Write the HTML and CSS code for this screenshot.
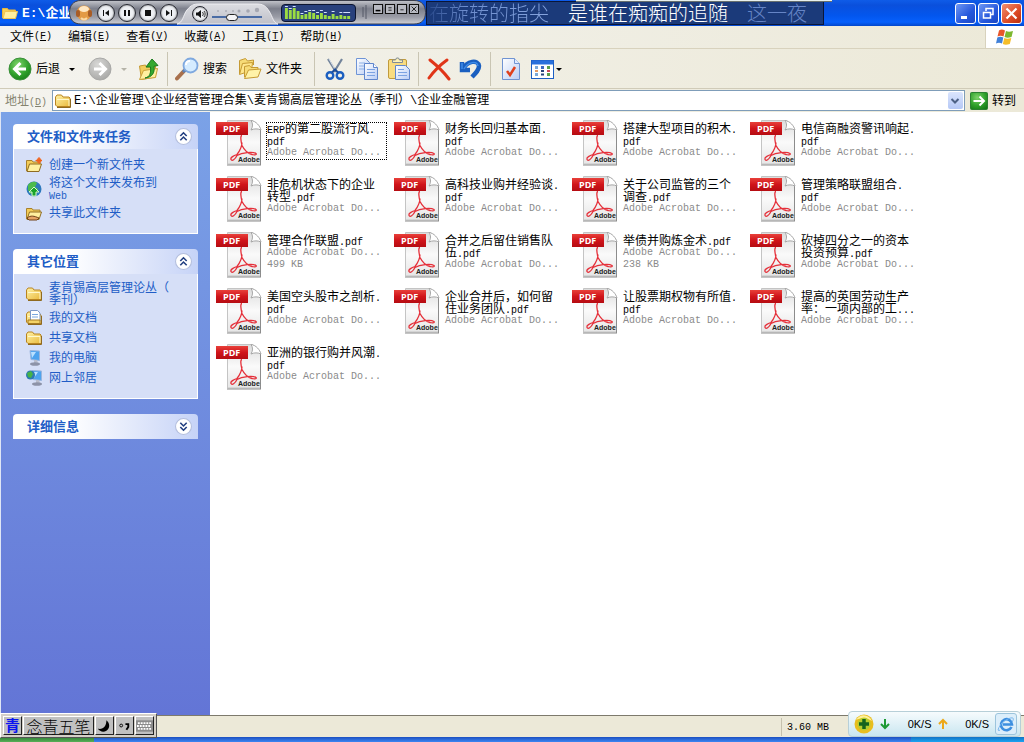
FILE: index.html
```html
<!DOCTYPE html>
<html lang="zh-CN">
<head>
<meta charset="utf-8">
<title>企业金融管理</title>
<link rel="stylesheet" href="styles.css">
</head>
<body>
<svg class="defs" aria-hidden="true">
  <defs>
    <linearGradient id="red" x1="0" y1="0" x2="0" y2="1"><stop offset="0" stop-color="#e8403a"/><stop offset=".5" stop-color="#d0141a"/><stop offset="1" stop-color="#b50c12"/></linearGradient>
    <linearGradient id="page" x1="0" y1="0" x2="0" y2="1"><stop offset="0" stop-color="#dcdcdc"/><stop offset=".5" stop-color="#fafafa"/><stop offset="1" stop-color="#e6e6e6"/></linearGradient>
    <linearGradient id="gold" x1="0" y1="0" x2="1" y2="1"><stop offset="0" stop-color="#fff3a8"/><stop offset="1" stop-color="#e9b93c"/></linearGradient>
    <radialGradient id="green" cx=".4" cy=".3" r=".8"><stop offset="0" stop-color="#7ed36a"/><stop offset=".6" stop-color="#2fa02b"/><stop offset="1" stop-color="#167a18"/></radialGradient>
    <radialGradient id="grey" cx=".4" cy=".3" r=".8"><stop offset="0" stop-color="#d8d8d6"/><stop offset="1" stop-color="#a4a4a2"/></radialGradient>
    <linearGradient id="sheet" x1="0" y1="0" x2="1" y2="1"><stop offset="0" stop-color="#ffffff"/><stop offset="1" stop-color="#b9cdf5"/></linearGradient>
    <linearGradient id="metal" x1="0" y1="0" x2="0" y2="1"><stop offset="0" stop-color="#c4c6cc"/><stop offset=".35" stop-color="#7c7f8b"/><stop offset=".7" stop-color="#9a9ca6"/><stop offset="1" stop-color="#cfd0d6"/></linearGradient>
    <linearGradient id="silver" x1="0" y1="0" x2="0" y2="1"><stop offset="0" stop-color="#dcdde2"/><stop offset="1" stop-color="#bfc0c8"/></linearGradient>
  </defs>
  <symbol id="i-pdf" viewBox="0 0 46 47">
    <path d="M11.500 1.500h25l8 8.500v35h-33z" fill="url(#page)" stroke="#c4c4c4"/>
    <path d="M11 46h34M44.500 11v35" stroke="#8c8c8c"/>
    <path d="M35 1.500c2 3 2 6 0 9.500 3-1.500 7-1.500 10 0-1-4-5-9-10-9.500z" fill="#fff" stroke="#a5a5a5"/>
    <path d="M26 16.500c-2 0-1 6 0 10 2 4 6 8 10 9 3 1 5 0 4-1-3-2-14-1-19 2-2 4-5 6-6 4s3-4 6-5c3-4 5-8 5-12" fill="none" stroke="#e5303a" stroke-width="1.300"/>
    <rect x="0" y="3" width="32" height="13" fill="url(#red)"/>
    <text x="7" y="13" font-family="Open Sans, sans-serif" font-size="9" font-weight="700" fill="#fff">PDF</text>
    <text x="22" y="43" font-family="Liberation Sans, sans-serif" font-size="7" font-weight="700" fill="#222">Adobe</text>
  </symbol>
  <symbol id="i-folder" viewBox="0 0 16 16">
    <path d="M.5 4l1.500-2h4.500l1.500 2h6l1 1v8.500h-13l-1.500-1.500z" fill="url(#gold)" stroke="#b98420"/>
    <path d="M2 6.500h12v6.500" fill="none" stroke="#fff8cc"/>
    <path d="M2 14.500h13.500V6" fill="none" stroke="#8f6a20"/>
  </symbol>
  <symbol id="i-openfolder" viewBox="0 0 16 16">
    <path d="M.5 14V3.500h5.500l1 1.500h7v3" fill="#f3cc58" stroke="#a8812c"/>
    <path d="M1 14.500l2.500-7.500h12l-2.500 7.500z" fill="#fff0a0" stroke="#8f6c22"/>
  </symbol>
  <symbol id="i-titlefolder" viewBox="0 0 16 16">
    <path d="M.5 13V3.500h5l1 1.500h7v2" fill="#f5cf55" stroke="#e8b63c"/>
    <path d="M1 13.500l2-7h12.500l-2 7z" fill="#fff0a0" stroke="#f0c452"/>
  </symbol>
  <symbol id="i-monitor" viewBox="0 0 16 16">
    <path d="M4 .5l9.500 .5v9.500l-8.500-1z" fill="#4da3ee" stroke="#9ab5dd"/>
    <path d="M5 2l5 0-4 6z" fill="#b9e0ff"/><path d="M8 10h3l1 3H8z" fill="#b8bccb"/><ellipse cx="9" cy="14" rx="5" ry="1.800" fill="#8d93a8"/>
  </symbol>
  <symbol id="i-chev" viewBox="0 0 16 16">
    <circle cx="8" cy="8" r="7.500" fill="#fff" stroke="#b3bedd"/>
    <path d="M5 7.500l3-3 3 3M5 11.500l3-3 3 3" fill="none" stroke="#223f80" stroke-width="1.500"/>
  </symbol>
</svg>

<div class="window">
  <header class="titlebar">
    <svg class="s16" viewBox="0 0 16 16"><use href="#i-titlefolder"/></svg>
    <h1 class="title"><span class="latin-title">E:\</span>企业</h1>
    <div class="winbtns">
      <button class="winbtn" aria-label="最小化"><svg viewBox="0 0 19 19"><path d="M5 13.500h6" stroke="#fff" stroke-width="3"/></svg></button>
      <button class="winbtn" aria-label="还原"><svg viewBox="0 0 19 19"><path d="M7 7V4.500h7v6h-2M4.500 8.500h7v5.500h-7z" fill="none" stroke="#fff" stroke-width="1.500"/></svg></button>
      <button class="winbtn close" aria-label="关闭"><svg viewBox="0 0 19 19"><path d="M4.500 4.500l10 10M14.500 4.500l-10 10" stroke="#fff" stroke-width="2.200"/></svg></button>
    </div>
  </header>

  <nav class="menubar">
    <button>文件<i>(<u>F</u>)</i></button><button>编辑<i>(<u>E</u>)</i></button><button>查看<i>(<u>V</u>)</i></button><button>收藏<i>(<u>A</u>)</i></button><button>工具<i>(<u>T</u>)</i></button><button>帮助<i>(<u>H</u>)</i></button>
    <div class="flag">
      <svg viewBox="0 0 20 18" width="20" height="18"><path d="M4 2.500c2-1.500 4-1 6 0L8.500 8.500c-2-1-4-1-6 0z" fill="#e8562a"/><path d="M11 3c2 1 4 1 7 0l-1.500 6c-3 1-5 1-7 0z" fill="#7cb82f"/><path d="M2.300 9.500c2-1 4-1 6 0L7 15.500c-2-1-4-1-6 0z" fill="#4080d8"/><path d="M9.300 10c2 1 4 1 7 0l-1.500 6c-3 1-5 1-7 0z" fill="#f5bd28"/></svg>
    </div>
  </nav>

  <div class="toolbar">
    <div class="group nav">
      <button><svg viewBox="0 0 24 24"><circle cx="12" cy="12" r="11" fill="url(#green)" stroke="#3b8f3a"/><path d="M12.500 6L6.500 12l6 6M7 12h11" fill="none" stroke="#fff" stroke-width="3"/></svg>后退</button>
      <button class="drop" aria-label="后退列表"><svg viewBox="0 0 8 24"><path d="M1 11h6l-3 3z" fill="#000"/></svg></button>
      <button class="fwd" aria-label="前进"><svg viewBox="0 0 24 24"><circle cx="12" cy="12" r="11" fill="url(#grey)" stroke="#a9a9a7"/><path d="M11.500 6l6 6-6 6M17 12H6" fill="none" stroke="#fff" stroke-width="3"/></svg></button>
      <button class="drop" aria-label="前进列表"><svg viewBox="0 0 8 24"><path d="M1 11h6l-3 3z" fill="#b5b3a8"/></svg></button>
      <button class="up" aria-label="向上"><svg viewBox="0 0 24 24"><path d="M3.500 9l6-1 1 2 9-1v11l-14 2.500z" fill="#f2cd5c" stroke="#c59a33"/><path d="M3.500 22.500l4-9 14-2-2 9z" fill="#fff0a0" stroke="#c9a03a"/><path d="M9 21c5-1 6-5 5.500-11h-4.500l6-8 6 6.500-4 .7c1 7-2 11-9 11.800z" fill="#35a82f" stroke="#187a1c"/></svg></button>
    </div>
    <div class="group find">
      <button><svg viewBox="0 0 24 24"><path d="M9 14l-7 7.500" stroke="#a9714d" stroke-width="4" stroke-linecap="round"/><path d="M10 13l-2 2" stroke="#5b83b8" stroke-width="3"/><circle cx="15.500" cy="8.500" r="7" fill="#d5ecff" stroke="#7fa9df" stroke-width="1.800"/><path d="M11 8c0-3 2-4 4-4" stroke="#fff" stroke-width="2" fill="none"/></svg>搜索</button>
      <button><svg viewBox="0 0 24 24"><path d="M1.500 17V3.500l6-2 2 2.500 6-1v5" fill="#f7dc78" stroke="#c59a33"/><path d="M1.500 17.500l3-11 10-1-1 8z" fill="#ffe78e" stroke="#c59a33"/><path d="M6.500 20V9.500l5-1 1.500 2h7v3" fill="#f7dc78" stroke="#c59a33"/><path d="M6.500 21.500l4-8.500 12.500-1-3 8z" fill="#fff2a8" stroke="#c59a33"/></svg>文件夹</button>
    </div>
    <div class="group">
      <button aria-label="剪切"><svg viewBox="0 0 24 24"><path d="M5 2l8 13M19 2l-8 13" stroke="#73849b" stroke-width="2.200"/><path d="M6 2l7 12" stroke="#d8e0ea"/><circle cx="7" cy="18.500" r="3.300" fill="none" stroke="#1c5fc0" stroke-width="2.400"/><circle cx="17" cy="18.500" r="3.300" fill="none" stroke="#1c5fc0" stroke-width="2.400"/><path d="M9 15.500l3-3 3 3" stroke="#1b4c9c" stroke-width="2" fill="none"/></svg></button>
      <button aria-label="复制"><svg viewBox="0 0 24 24"><path d="M1.500 1.500h9l4 4v12h-13z" fill="url(#sheet)" stroke="#6f94d6"/><path d="M4 6h6M4 9h6M4 12h5" stroke="#8db0e6"/><path d="M9.500 6.500h9l4 4v12h-13z" fill="url(#sheet)" stroke="#6086cc"/><path d="M18.500 6.500v4h4" fill="#fff" stroke="#6086cc"/><path d="M12 12.500h8M12 15.500h8M12 18.500h8" stroke="#7ca3e2"/></svg></button>
      <button aria-label="粘贴"><svg viewBox="0 0 24 24"><rect x="1.500" y="2.500" width="18" height="19" rx="1.500" fill="#f9dc80" stroke="#c09a3c"/><path d="M5.500 5.500V3h3l1-2h2l1 2h3v2.500z" fill="#fff3b8" stroke="#808c98"/><path d="M8.500 8.500h10l4 4v10h-14z" fill="url(#sheet)" stroke="#6086cc"/><path d="M11 12.500h6M11 15.500h9M11 18.500h9" stroke="#7ca3e2"/></svg></button>
    </div>
    <div class="group">
      <button aria-label="删除"><svg viewBox="0 0 24 24"><path d="M3 3c5 4 13 11 19 19M20 3C13 8 7 14 2 21" fill="none" stroke="#e03518" stroke-width="3" stroke-linecap="round"/></svg></button>
      <button aria-label="撤消"><svg viewBox="0 0 24 24"><path d="M3 5v8h8M4 12C8 4 19 2 20 9c0 4-3 7-7 11" fill="none" stroke="#1a5fc0" stroke-width="4.500"/><path d="M3 6v6M5 12C9 5 18 3 19 9" fill="none" stroke="#3f8ce8" stroke-width="1.500"/></svg></button>
    </div>
    <div class="group">
      <button aria-label="属性"><svg viewBox="0 0 24 24"><path d="M3.500 1.500h12l5 5v16h-17z" fill="url(#sheet)" stroke="#7094d2"/><path d="M15.500 1.500v5h5" fill="#dfeaff" stroke="#7094d2"/><path d="M8 14l3 4 5-8" fill="none" stroke="#e0401c" stroke-width="2.500"/></svg></button>
      <button class="views"><svg viewBox="0 0 24 24"><rect x=".5" y="3.500" width="22" height="18" fill="#fff" stroke="#1d5fc4"/><path d="M1 5.500h21" stroke="#2870dc" stroke-width="4"/><path d="M4 10.500h3M4 17.500h3" stroke="#7aa8d8" stroke-width="3"/><path d="M4 14h3" stroke="#e49a62" stroke-width="2"/><path d="M10 10.500h3" stroke="#3c68c0" stroke-width="3"/><path d="M10 14h3M10 17.500h3" stroke="#28447c" stroke-width="2"/><path d="M16 10.500h3M16 17.500h3" stroke="#59a04a" stroke-width="3"/><path d="M16 14h3" stroke="#c94a5c" stroke-width="2"/></svg><svg class="tri" viewBox="0 0 8 24" aria-label="查看"><path d="M1 11h6l-3 3z" fill="#000"/></svg></button>
    </div>
  </div>

  <form class="address">
    <label for="addr">地址<i>(<u>D</u>)</i></label>
    <div class="field">
      <svg class="s16" viewBox="0 0 16 16"><use href="#i-folder"/></svg>
      <input id="addr" type="text" value="E:\企业管理\企业经营管理合集\麦肯锡高层管理论丛（季刊）\企业金融管理">
      <button type="button" class="combo" aria-label="展开"><svg viewBox="0 0 14 16"><path d="M3.500 6l3.500 3.500L10.500 6" fill="none" stroke="#4d6185" stroke-width="2"/></svg></button>
    </div>
    <button type="button" class="go"><svg viewBox="0 0 18 18"><rect x=".5" y=".5" width="17" height="17" rx="1" fill="url(#green)" stroke="#2c8032"/><path d="M9.500 4.500L14 9l-4.500 4.500M13 9H3.500" fill="none" stroke="#fff" stroke-width="2"/></svg>转到</button>
  </form>

  <div class="body">
    <aside class="sidebar">
      <section class="panel">
        <h2>文件和文件夹任务<button aria-label="折叠"><svg viewBox="0 0 16 16"><use href="#i-chev"/></svg></button></h2>
        <ul>
          <li><svg class="s16" viewBox="0 0 16 16"><use href="#i-openfolder"/><circle cx="13" cy="3.500" r="2.500" fill="#f0702c"/><path d="M9.500 3.500h6.500M13 0v7" stroke="#f0601c"/></svg><a href="#">创建一个新文件夹</a></li>
          <li><svg class="s16" viewBox="0 0 16 16"><circle cx="8" cy="8" r="7.500" fill="#2d79bd"/><path d="M2 4c3-4 7-4 9-2L9 6l3 2-2 6-5-1-3-4z" fill="#4cbb4c"/><path d="M8 6l5 5h-3v4H6v-4H3z" fill="#19a32a" stroke="#d6f5d0"/></svg><a href="#">将这个文件夹发布到<br><i>Web</i></a></li>
          <li><svg class="s16" viewBox="0 0 16 16"><use href="#i-openfolder"/><path d="M1 13c4-3 7-2 12 0l-2 2H3z" fill="#e6a465" stroke="#704318"/></svg><a href="#">共享此文件夹</a></li>
        </ul>
      </section>
      <section class="panel">
        <h2>其它位置<button aria-label="折叠"><svg viewBox="0 0 16 16"><use href="#i-chev"/></svg></button></h2>
        <ul>
          <li><svg class="s16" viewBox="0 0 16 16"><use href="#i-folder"/></svg><a href="#">麦肯锡高层管理论丛（<br>季刊）</a></li>
          <li><svg class="s16" viewBox="0 0 16 16"><use href="#i-folder"/><path d="M4.500 .5h7l2.500 2.500v8h-9.500z" fill="#fff" stroke="#7d98c7"/><path d="M6 4.500h6M6 7h6" stroke="#7aa7df"/><path d="M2 10h12v3.500H2z" fill="#f4d368" stroke="#a67c25"/></svg><a href="#">我的文档</a></li>
          <li><svg class="s16" viewBox="0 0 16 16"><use href="#i-folder"/></svg><a href="#">共享文档</a></li>
          <li><svg class="s16" viewBox="0 0 16 16"><use href="#i-monitor"/></svg><a href="#">我的电脑</a></li>
          <li><svg class="s16" viewBox="0 0 16 16"><use href="#i-monitor" x="2"/><circle cx="4.500" cy="5" r="4.500" fill="#2c78b4"/><path d="M1 3l4-2 2 3-2 4-3-1z" fill="#45b348"/></svg><a href="#">网上邻居</a></li>
        </ul>
      </section>
      <section class="panel">
        <h2>详细信息<button class="down" aria-label="展开"><svg viewBox="0 0 16 16"><use href="#i-chev"/></svg></button></h2>
      </section>
    </aside>

    <main class="files">
      <a href="#" class="file focused"><svg viewBox="0 0 46 47"><use href="#i-pdf"/></svg><span class="meta"><b><i>ERP</i>的第二股流行风<i>.<br>pdf</i></b><small>Adobe Acrobat Do...</small></span></a>
      <a href="#" class="file"><svg viewBox="0 0 46 47"><use href="#i-pdf"/></svg><span class="meta"><b>财务长回归基本面<i>.<br>pdf</i></b><small>Adobe Acrobat Do...</small></span></a>
      <a href="#" class="file"><svg viewBox="0 0 46 47"><use href="#i-pdf"/></svg><span class="meta"><b>搭建大型项目的积木<i>.<br>pdf</i></b><small>Adobe Acrobat Do...</small></span></a>
      <a href="#" class="file"><svg viewBox="0 0 46 47"><use href="#i-pdf"/></svg><span class="meta"><b>电信商融资警讯响起<i>.<br>pdf</i></b><small>Adobe Acrobat Do...</small></span></a>
      <a href="#" class="file"><svg viewBox="0 0 46 47"><use href="#i-pdf"/></svg><span class="meta"><b>非危机状态下的企业<br>转型<i>.pdf</i></b><small>Adobe Acrobat Do...</small></span></a>
      <a href="#" class="file"><svg viewBox="0 0 46 47"><use href="#i-pdf"/></svg><span class="meta"><b>高科技业购并经验谈<i>.<br>pdf</i></b><small>Adobe Acrobat Do...</small></span></a>
      <a href="#" class="file"><svg viewBox="0 0 46 47"><use href="#i-pdf"/></svg><span class="meta"><b>关于公司监管的三个<br>调查<i>.pdf</i></b><small>Adobe Acrobat Do...</small></span></a>
      <a href="#" class="file"><svg viewBox="0 0 46 47"><use href="#i-pdf"/></svg><span class="meta"><b>管理策略联盟组合<i>.<br>pdf</i></b><small>Adobe Acrobat Do...</small></span></a>
      <a href="#" class="file"><svg viewBox="0 0 46 47"><use href="#i-pdf"/></svg><span class="meta"><b>管理合作联盟<i>.pdf</i></b><small>Adobe Acrobat Do...</small><small>499 KB</small></span></a>
      <a href="#" class="file"><svg viewBox="0 0 46 47"><use href="#i-pdf"/></svg><span class="meta"><b>合并之后留住销售队<br>伍<i>.pdf</i></b><small>Adobe Acrobat Do...</small></span></a>
      <a href="#" class="file"><svg viewBox="0 0 46 47"><use href="#i-pdf"/></svg><span class="meta"><b>举债并购炼金术<i>.pdf</i></b><small>Adobe Acrobat Do...</small><small>238 KB</small></span></a>
      <a href="#" class="file"><svg viewBox="0 0 46 47"><use href="#i-pdf"/></svg><span class="meta"><b>砍掉四分之一的资本<br>投资预算<i>.pdf</i></b><small>Adobe Acrobat Do...</small></span></a>
      <a href="#" class="file"><svg viewBox="0 0 46 47"><use href="#i-pdf"/></svg><span class="meta"><b>美国空头股市之剖析<i>.<br>pdf</i></b><small>Adobe Acrobat Do...</small></span></a>
      <a href="#" class="file"><svg viewBox="0 0 46 47"><use href="#i-pdf"/></svg><span class="meta"><b>企业合并后，如何留<br>住业务团队<i>.pdf</i></b><small>Adobe Acrobat Do...</small></span></a>
      <a href="#" class="file"><svg viewBox="0 0 46 47"><use href="#i-pdf"/></svg><span class="meta"><b>让股票期权物有所值<i>.<br>pdf</i></b><small>Adobe Acrobat Do...</small></span></a>
      <a href="#" class="file"><svg viewBox="0 0 46 47"><use href="#i-pdf"/></svg><span class="meta"><b>提高的英国劳动生产<br>率：一项内部的工<i>...</i></b><small>Adobe Acrobat Do...</small></span></a>
      <a href="#" class="file"><svg viewBox="0 0 46 47"><use href="#i-pdf"/></svg><span class="meta"><b>亚洲的银行购并风潮<i>.<br>pdf</i></b><small>Adobe Acrobat Do...</small></span></a>
    </main>
  </div>

  <footer class="status"><span>3.60 MB</span></footer>
  <div class="taskbar"><div class="start"></div><div class="tray"></div></div>
</div>

<div class="player">
  <svg class="skin" viewBox="0 0 357 25" aria-hidden="true">
    <path d="M12 .5h333c8 0 11.500 5 11.500 12s-3.500 11.500-11.500 11.500H12C4 24 .5 19 .5 12.500S4 .5 12 .5z" fill="url(#metal)" stroke="#3a3d49"/>
    <path d="M108 24c6-1 6-9 10-14 4-5 7-6 12-6h58c6 0 9 2 12 7 4 6 4 12 9 13z" fill="url(#silver)" stroke="#eeeef2"/>
    <path d="M148 11h2M156 11h2M163 11h2" stroke="#9a9ca6"/><circle cx="170" cy="11" r="1.500" fill="#a6a8b2"/><circle cx="179" cy="11" r="1.800" fill="#a6a8b2"/><circle cx="188" cy="10" r="2.200" fill="#a6a8b2"/>
    <path d="M294 7v10M297 5v14" stroke="#555966"/>
  </svg>
  <svg class="face" viewBox="0 0 16 18"><circle cx="8" cy="9" r="7.500" fill="#e39a45"/><ellipse cx="8" cy="5" rx="5" ry="3" fill="#ffe7c2"/><rect y="6" width="4" height="7" rx="2" fill="#a85c25"/><rect x="12" y="6" width="4" height="7" rx="2" fill="#a85c25"/><path d="M5 14c2 2 4 2 6 0" stroke="#fbd9a4" stroke-width="2" fill="none"/></svg>
  <div class="transport">
    <button aria-label="上一首"><svg viewBox="0 0 16 16"><path d="M5.500 5v6" stroke="#111"/><path d="M11 5v6L7 8z" fill="#111"/></svg></button>
    <button aria-label="暂停"><svg viewBox="0 0 16 16"><path d="M6 5v6M10 5v6" stroke="#111" stroke-width="2"/></svg></button>
    <button aria-label="停止"><svg viewBox="0 0 16 16"><path d="M5 5h6v6H5z" fill="#111"/></svg></button>
    <button aria-label="下一首"><svg viewBox="0 0 16 16"><path d="M10.500 5v6" stroke="#111"/><path d="M5 5v6l4-3z" fill="#111"/></svg></button>
  </div>
  <button class="vol" aria-label="静音"><svg viewBox="0 0 16 16"><path d="M4 6.500h2l3-2.500v8L6 9.500H4z" fill="#111"/><path d="M10.500 6c1 1.500 1 2.500 0 4M12 5c1.500 2 1.500 4 0 6" fill="none" stroke="#333"/></svg></button>
  <input class="volume" type="range" min="0" max="100" value="38" aria-label="音量">
  <div class="lcd"><svg viewBox="0 0 73 15" preserveAspectRatio="none"><path d="M2 3h3v11H2zM6 5h3v9H6zM10 3h3v11h-3zM14 6h3v8h-3zM18 10h3v4h-3zM22 9h3v5h-3zM26 7h3v7h-3zM30 8h3v6h-3zM34 10h3v4h-3zM38 8h3v6h-3zM42 10h3v4h-3zM46 11h3v3h-3zM50 9h3v5h-3zM54 11h3v3h-3zM58 10h3v4h-3zM62 11h3v3h-3zM66 11h3v3h-3z" fill="#9bdc42"/><path d="M2 1.500h3M6 3.500h3M10 1.500h3M18 8.500h3M22 6.500h3M26 5.500h3M30 5.500h3M34 7.500h3M38 5.500h3M42 7.500h3M50 6.500h3M58 7.500h3M62 7.500h7" stroke="#d6e2ff"/></svg></div>
  <div class="mini">
    <button aria-label="最小化"><svg viewBox="0 0 10 10"><path d="M2 7h6" stroke="#000" stroke-width="2"/></svg></button>
    <button aria-label="菜单"><svg viewBox="0 0 10 10"><path d="M3 3.500h4M3 6.500h4" stroke="#000"/></svg></button>
    <button aria-label="收起"><svg viewBox="0 0 10 10"><path d="M3 6h4" stroke="#000"/></svg></button>
    <button aria-label="关闭"><svg viewBox="0 0 10 10"><path d="M2 2l6 6M8 2L2 8" stroke="#000"/></svg></button>
  </div>
</div>

<div class="lyrics"><span class="past">在旋转的指尖</span><span class="now">是谁在痴痴的追随</span><span class="next">这一夜</span></div>
<div class="sliver"></div>

<div class="ime">
  <button class="logo">青</button>
  <button class="name">念青五笔</button>
  <button aria-label="半角"><svg viewBox="0 0 18 18"><path d="M11 3c4 3 4 9 0 11-3 2-7 1-9-2 6 1 9-3 9-9z" fill="#000"/></svg></button>
  <button aria-label="标点"><svg viewBox="0 0 18 18"><circle cx="5.500" cy="8.500" r="1.500" fill="none" stroke="#000"/><path d="M10 7h3v3l-2 3" fill="none" stroke="#000" stroke-width="2"/></svg></button>
  <button aria-label="软键盘"><svg viewBox="0 0 18 18"><rect y="3" width="18" height="12" fill="#8b8b8b"/><path d="M2 6h14M1 9h15M2 12h14" stroke="#fff" stroke-width="2" stroke-dasharray="2 1"/></svg></button>
</div>

<div class="net">
  <svg class="ball" viewBox="0 0 20 20"><circle cx="10" cy="10" r="9.500" fill="#e9bd1f"/><path d="M2 6c4-7 13-6 16 1-4-3-11-4-16-1z" fill="#fff09a"/><circle cx="10" cy="10" r="6.500" fill="#b7cd2d"/><path d="M10 5v10M5 10h10" stroke="#16631e" stroke-width="3.500"/></svg>
  <svg class="arrow" viewBox="0 0 10 12"><path d="M5 1v9M1 6l4 4 4-4" fill="none" stroke="#1d9a35" stroke-width="2"/></svg>
  <span>0K/S</span>
  <svg class="arrow" viewBox="0 0 10 12"><path d="M5 11V2M1 6l4-4 4 4" fill="none" stroke="#eca81a" stroke-width="2"/></svg>
  <span>0K/S</span>
  <button aria-label="浏览器"><svg viewBox="0 0 18 18"><path d="M14.500 12a5.500 5.500 0 1 1 .5-2.500H6" fill="none" stroke="#3d8fe0" stroke-width="2.600"/><path d="M3 15c-4 3-1-6 6-10s9-2 6 2" fill="none" stroke="#79b7ee"/></svg></button>
</div>
</body>
</html>
```

FILE: styles.css
```css
* { box-sizing: border-box; }
html, body { margin: 0; height: 100%; }
body {
  position: relative;
  overflow: hidden;
  font: 12px/12px "Liberation Sans", "Noto Sans CJK SC", sans-serif;
  color: #000;
}
button { border: 0; padding: 0; background: none; font: inherit; color: inherit; display: flex; align-items: center; }
a { color: inherit; text-decoration: none; }
i { font: 10px/8px "Liberation Mono", monospace; }
small { font: 10px/12px "Liberation Mono", monospace; }
b { font-weight: 400; }
svg { display: block; flex: none; }
.defs { position: absolute; width: 0; height: 0; }
.s16 { width: 16px; height: 16px; }

.window { min-height: 100vh; display: flex; flex-direction: column; }

/* title bar */
.titlebar {
  height: 26px; display: flex; align-items: center; gap: 4px; padding: 0 2px;
  background: linear-gradient(#0f5ce8 0, #0a50dc 20%, #0356ee 60%, #0660fc 85%, #0347cb 100%);
}
.title { margin: 0; flex: 1; white-space: nowrap; font-size: 13px; line-height: 20px; color: #fff; }
.latin-title { font: bold 13px/16px "Liberation Mono", monospace; }
.winbtns { display: flex; gap: 2px; }
.winbtn { width: 21px; height: 21px; border: 1px solid #fff; border-radius: 3px; background: linear-gradient(135deg, #6f98f4, #2557dc 60%, #1b48c4); }
.winbtn svg { width: 19px; height: 19px; }
.winbtn.close { background: linear-gradient(135deg, #f09070, #dc4a26 60%, #b93010); }

/* menu */
.menubar { height: 23px; display: flex; padding-left: 2px; background: linear-gradient(90deg, #f4f4f2, #ece9d8); border-bottom: 1px solid #d8d2bd; }
.menubar button { padding: 0 8px; }
.flag { margin-left: auto; width: 39px; background: #fff; border-left: 1px solid #d8d2bd; display: flex; align-items: center; justify-content: center; }

/* toolbar */
.toolbar { height: 40px; display: flex; align-items: center; background: linear-gradient(90deg, #f4f3ee, #ece9d8); border-bottom: 1px solid #d0cbb8; }
.group { height: 34px; display: flex; align-items: center; gap: 8px; padding: 0 7px 0 8px; border-left: 1px solid #c9c5b3; }
.group.nav { border: 0; padding-left: 8px; }
.group.find { gap: 11px; padding: 0 12px 0 7px; }
.group button { gap: 4px; }
.group svg { width: 24px; height: 24px; }
.group .drop svg, .group .tri { width: 8px; }
.group .fwd { margin-left: 4px; }
.group .views { gap: 0; }

/* address */
.address { height: 23px; margin: 0; display: flex; align-items: center; gap: 5px; padding: 0 8px 0 5px; background: linear-gradient(90deg, #f4f3ee, #ece9d8); }
.address label { color: #85836f; }
.field { flex: 1; height: 21px; display: flex; align-items: center; gap: 3px; padding: 0 1px 0 2px; background: #fff; border: 1px solid #7f9db9; }
.field input { flex: 1; min-width: 0; border: 0; padding: 0; outline: 0; font: 12px/16px "Liberation Mono", "Noto Sans CJK SC", monospace; color: #000; }
.combo { width: 15px; height: 17px; background: linear-gradient(#dbe5fd, #b5c8f6); border-radius: 2px; justify-content: center; }
.combo svg { width: 14px; height: 16px; }
.go { gap: 4px; }
.go svg { width: 18px; height: 18px; }

/* body */
.body { flex: 1; display: flex; min-height: 0; }
.sidebar { flex: none; width: 210px; border-left: 1px solid #dfe6f5; padding: 12px 12px 0; display: flex; flex-direction: column; gap: 15px; background: linear-gradient(#7ba2e7, #6375d6); }
.panel h2 { margin: 0; height: 25px; display: flex; align-items: center; justify-content: space-between; padding: 0 6px 0 14px; border-radius: 4px 4px 0 0; background: linear-gradient(90deg, #fff 30%, #c6d3f7); font-size: 13px; line-height: 16px; color: #215dc6; }
.panel h2 svg { width: 17px; height: 17px; }
.down { transform: rotate(180deg); }
.panel ul { list-style: none; margin: 0; padding: 8px 12px 12px; display: grid; gap: 4px; background: #d6dff7; border: solid #fff; border-width: 0 1px 1px; }
.panel li { min-height: 16px; display: flex; align-items: center; gap: 7px; color: #215dc6; white-space: nowrap; }

/* files */
.files { flex: 1; min-width: 0; padding: 7px 0 0 6px; display: grid; grid-template-columns: repeat(auto-fill, 178px); grid-auto-rows: 56px; align-content: start; background: #fff; }
.file { display: flex; align-items: flex-start; gap: 4px; }
.file svg { width: 46px; height: 47px; }
.meta { width: 121px; margin-top: 3px; border: 1px dotted transparent; white-space: nowrap; }
.meta b, .meta small { display: block; }
.meta small { color: #8a8a8a; }
.focused .meta { border-color: #000; }

/* status and taskbar */
.status { height: 22px; display: flex; justify-content: flex-end; align-items: center; background: #ece9d8; border-top: 1px solid #7d7a6c; }
.status span { width: 243px; padding: 3px 0 1px 5px; border-left: 1px solid #c5c1ae; font: 10px/14px "Liberation Mono", monospace; }
.taskbar { height: 5px; display: flex; background: linear-gradient(#1c4fc0, #3c86f2); }
.start { width: 94px; background: linear-gradient(#2f7d35, #58b057); }
.tray { margin-left: auto; width: 113px; background: linear-gradient(#1273c4, #1ba4f2); }

/* floating player */
.player { position: absolute; left: 69px; top: 0; width: 357px; height: 25px; display: flex; align-items: center; padding-left: 7px; }
.skin { position: absolute; inset: 0; width: 100%; height: 100%; }
.player > :not(.skin) { position: relative; }
.face { width: 16px; height: 18px; }
.transport { display: flex; gap: 3px; margin-left: 5px; }
.transport button, .vol { width: 18px; height: 18px; border: 1px solid #23252e; border-radius: 50%; background: #eef0f4; box-shadow: inset 0 0 2px #555; justify-content: center; }
.transport svg, .vol svg { width: 16px; height: 16px; }
.vol { width: 16px; height: 16px; margin: 3px 0 0 14px; }
.volume { appearance: none; width: 50px; height: 12px; margin: 9px 0 0 4px; background: linear-gradient(#4a6ca5, #4a6ca5) center / 100% 2px no-repeat; }
.volume::-webkit-slider-thumb { appearance: none; width: 12px; height: 7px; border: 1px solid #222; border-radius: 4px; background: #f4f4f6; }
.lcd { width: 75px; height: 18px; margin-left: 19px; border: 1px solid #0c1530; border-radius: 4px; background: #28407c; padding: 0 1px; }
.lcd svg { width: 71px; height: 15px; }
.mini { display: flex; gap: 2px; margin: 0 0 7px 17px; }
.mini button { width: 10px; height: 10px; border: 1px solid #111; background: #b8bac2; }
.mini svg { width: 8px; height: 8px; }

/* lyrics strip */
.lyrics { position: absolute; left: 426px; top: 1px; width: 398px; height: 24px; padding-left: 2px; display: flex; align-items: center; gap: 19px; border: 1px solid #0a1638; background: #1b3a7a; font: 300 20px/22px "Noto Sans CJK SC", sans-serif; white-space: nowrap; }
.past { color: transparent; background: linear-gradient(90deg, #2c4c8e, #6d8dcd 30%, #86a4de); background-clip: text; -webkit-background-clip: text; }
.now { color: #fff; }
.next { color: #6685c6; }
.sliver { position: absolute; left: 576px; top: 0; width: 256px; height: 2px; background: #e8f0ee; border-bottom: 1px solid #68706e; }

/* input method bar */
.ime { position: absolute; left: 0; bottom: 4px; height: 25px; display: flex; padding: 2px; gap: 1px; background: #d4d0c8; border: 1px solid; border-color: #fff #555 #555 #fff; }
.ime button { width: 19px; justify-content: center; background: #c0c0c0; border: 1px solid; border-color: #fff #222 #222 #fff; }
.ime svg { width: 17px; height: 18px; }
.ime .logo { color: #0a14f0; font-size: 15px; line-height: 18px; font-weight: 700; }
.ime .name { width: 71px; font: 300 16px/18px "Noto Sans CJK SC", sans-serif; white-space: nowrap; }

/* network meter */
.net { position: absolute; right: 3px; bottom: 5px; width: 173px; height: 26px; display: flex; align-items: center; padding: 0 3px 0 5px; border: 1px solid #b7cfd8; border-radius: 4px; background: linear-gradient(#f6fbfd, #c9e6f0); }
.ball { width: 20px; height: 20px; }
.arrow { width: 10px; height: 12px; margin-left: 6px; }
.net span { margin-left: auto; font-size: 11px; }
.net button { width: 22px; height: 22px; margin-left: 6px; border: 1px solid #9cc4dc; border-radius: 3px; justify-content: center; background: #dceefa; }
.net button svg { width: 18px; height: 18px; }
```
